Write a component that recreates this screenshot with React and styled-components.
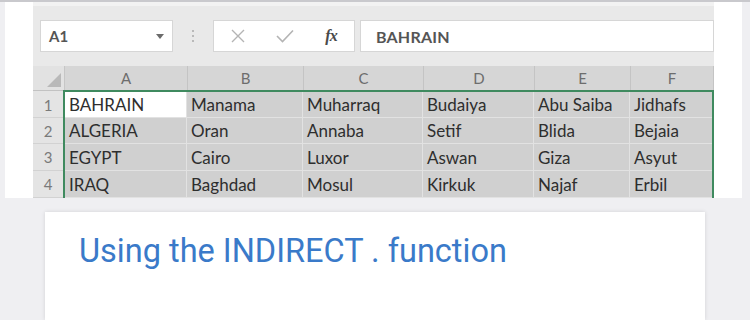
import React from 'react'
import styled, { createGlobalStyle } from 'styled-components'

const GlobalStyle = createGlobalStyle`
  html, body {
    margin: 0;
    padding: 0;
    background: #efeff2;
    overflow: hidden;
  }
  #root {
    width: 750px;
    height: 320px;
  }
`

const Page = styled.div`
  width: 750px;
  height: 320px;
  background: #efeff2;
  border-top: 2px solid #c9c9cd;
  box-sizing: border-box;
  display: flex;
  flex-direction: column;
`

const Shot = styled.div`
  margin-left: 5px;
  width: 737px;
  height: 196px;
  background: #ffffff;
  padding: 0 28px;
  box-sizing: border-box;
  overflow: hidden;
`

const Excel = styled.div`
  width: 681px;
  height: 196px;
  background: #e9e9e9;
  display: flex;
  flex-direction: column;
  overflow: hidden;
  font-family: "Lato", "Open Sans", sans-serif;
`

const Toolbar = styled.div`
  height: 64px;
  display: flex;
  align-items: flex-start;
  padding: 14px 0 0 7px;
  box-sizing: border-box;
  border-top: 4px solid #f2f2f2;
`

const Box = styled.div`
  height: 32px;
  width: ${p => p.$w}px;
  margin-left: ${p => p.$gap || 0}px;
  background: #ffffff;
  border: 1px solid #d6d6d6;
  box-sizing: border-box;
  display: flex;
  align-items: center;
  flex-shrink: 0;
`

const NameText = styled.span`
  flex: 1;
  padding-left: 8px;
  font-size: 15px;
  color: #555555;
  font-weight: 700;
`

const Caret = styled.span`
  width: 0;
  height: 0;
  border-left: 4px solid transparent;
  border-right: 4px solid transparent;
  border-top: 5px solid #6b6b6b;
  margin-right: 8px;
`

const Dots = styled.div`
  width: 40px;
  height: 32px;
  flex-shrink: 0;
  display: flex;
  flex-direction: column;
  align-items: center;
  justify-content: center;
  gap: 3px;

  span {
    width: 2px;
    height: 2px;
    border-radius: 1px;
    background: #a8a8a8;
  }
`

const IconSlot = styled.div`
  width: ${p => p.$w}px;
  display: flex;
  justify-content: center;
  align-items: center;
`

const Fx = styled.span`
  font-family: "Liberation Serif", serif;
  font-style: italic;
  font-weight: 700;
  font-size: 16px;
  color: #4a4a4a;
  letter-spacing: -1px;
`

const FormulaText = styled.span`
  padding-left: 15px;
  font-size: 16px;
  color: #555555;
  font-weight: 700;
  letter-spacing: 0.2px;
`

const HeaderRow = styled.div`
  display: flex;
  height: 25px;
  background: #d6d6d6;
  border-bottom: 1px solid #c2c2c2;
  box-sizing: border-box;
`

const Corner = styled.div`
  width: 32px;
  position: relative;
  background: #e2e2e2;
  border-right: 1px solid #c6c6c6;
  box-sizing: border-box;

  &::after {
    content: '';
    position: absolute;
    right: 3px;
    bottom: 3px;
    width: 0;
    height: 0;
    border-left: 14px solid transparent;
    border-bottom: 14px solid #b9b9b9;
  }
`

const ColHead = styled.div`
  width: ${p => p.$w}px;
  display: flex;
  align-items: center;
  justify-content: center;
  font-size: 15px;
  color: #6d6d6d;
  border-right: 1px solid #c4c4c4;
  box-sizing: border-box;
`

const Body = styled.div`
  display: flex;
`

const RowHeads = styled.div`
  width: 32px;
  background: #e4e4e4;
  padding-top: 1px;
  display: flex;
  flex-direction: column;
`

const RowHead = styled.div`
  height: ${p => p.$h}px;
  display: flex;
  align-items: center;
  justify-content: center;
  font-size: 15px;
  color: #7a7a7a;
  border-bottom: 1px solid #d2d2d2;
  box-sizing: border-box;
`

const Selection = styled.div`
  display: grid;
  grid-template-columns: ${p => p.$cols};
  border: 2px solid #3f8a5f;
  border-bottom: none;
  margin-top: -1px;
  background: #e2e2e2;
  gap: 1px;
  align-content: start;
`

const Cell = styled.div`
  height: ${p => p.$h}px;
  background: ${p => (p.$active ? '#ffffff' : '#d0d0d0')};
  display: flex;
  align-items: center;
  padding-left: 4px;
  font-size: 17px;
  color: #2e2e2e;
  white-space: nowrap;
  overflow: hidden;
`

const Card = styled.div`
  margin: 14px 0 0 45px;
  width: 660px;
  flex: 1;
  background: #ffffff;
  box-shadow: 0 0 4px rgba(0, 0, 0, 0.12);
  padding: 23px 0 0 34px;
  box-sizing: border-box;
`

const Title = styled.h2`
  margin: 0;
  font-family: "Roboto", "Inter", sans-serif;
  font-weight: 400;
  font-size: 32.5px;
  line-height: 1;
  color: #3a7ac9;
`

const widths = [121, 115, 119, 110, 95, 82]
const rows = [
  ['BAHRAIN', 'Manama', 'Muharraq', 'Budaiya', 'Abu Saiba', 'Jidhafs'],
  ['ALGERIA', 'Oran', 'Annaba', 'Setif', 'Blida', 'Bejaia'],
  ['EGYPT', 'Cairo', 'Luxor', 'Aswan', 'Giza', 'Asyut'],
  ['IRAQ', 'Baghdad', 'Mosul', 'Kirkuk', 'Najaf', 'Erbil'],
]
const heights = [25, 25, 26, 26]

const XIcon = () => (
  <svg width="16" height="16" viewBox="0 0 16 16">
    <path d="M2 2 L14 14 M14 2 L2 14" stroke="#b4b4b4" strokeWidth="1.4" fill="none" />
  </svg>
)

const CheckIcon = () => (
  <svg width="18" height="14" viewBox="0 0 18 14">
    <path d="M1 7 L6.5 12.5 L17 1.5" stroke="#b4b4b4" strokeWidth="1.6" fill="none" />
  </svg>
)

const App = () => {
  return (
    <>
      <GlobalStyle />
      <Page>
        <Shot>
          <Excel>
            <Toolbar>
              <Box $w={133}>
                <NameText>A1</NameText>
                <Caret />
              </Box>
              <Dots><span /><span /><span /></Dots>
              <Box $w={142}>
                <IconSlot $w={48}><XIcon /></IconSlot>
                <IconSlot $w={46}><CheckIcon /></IconSlot>
                <IconSlot $w={46}><Fx>fx</Fx></IconSlot>
              </Box>
              <Box $w={354} $gap={5}>
                <FormulaText>BAHRAIN</FormulaText>
              </Box>
            </Toolbar>
            <HeaderRow>
              <Corner />
              {['A', 'B', 'C', 'D', 'E', 'F'].map((l, i) => (
                <ColHead key={l} $w={widths[i] + (i === 0 ? 2 : 1)}>{l}</ColHead>
              ))}
            </HeaderRow>
            <Body>
              <RowHeads>
                {heights.map((h, i) => (
                  <RowHead key={i} $h={h + 1}>{i + 1}</RowHead>
                ))}
              </RowHeads>
              <Selection $cols={widths.map(w => w + 'px').join(' ')}>
                {rows.map((r, ri) =>
                  r.map((c, ci) => (
                    <Cell key={ri + '-' + ci} $h={heights[ri]} $active={ri === 0 && ci === 0}>
                      {c}
                    </Cell>
                  ))
                )}
              </Selection>
            </Body>
          </Excel>
        </Shot>
        <Card>
          <Title>Using the INDIRECT . function</Title>
        </Card>
      </Page>
    </>
  )
}

export default App
